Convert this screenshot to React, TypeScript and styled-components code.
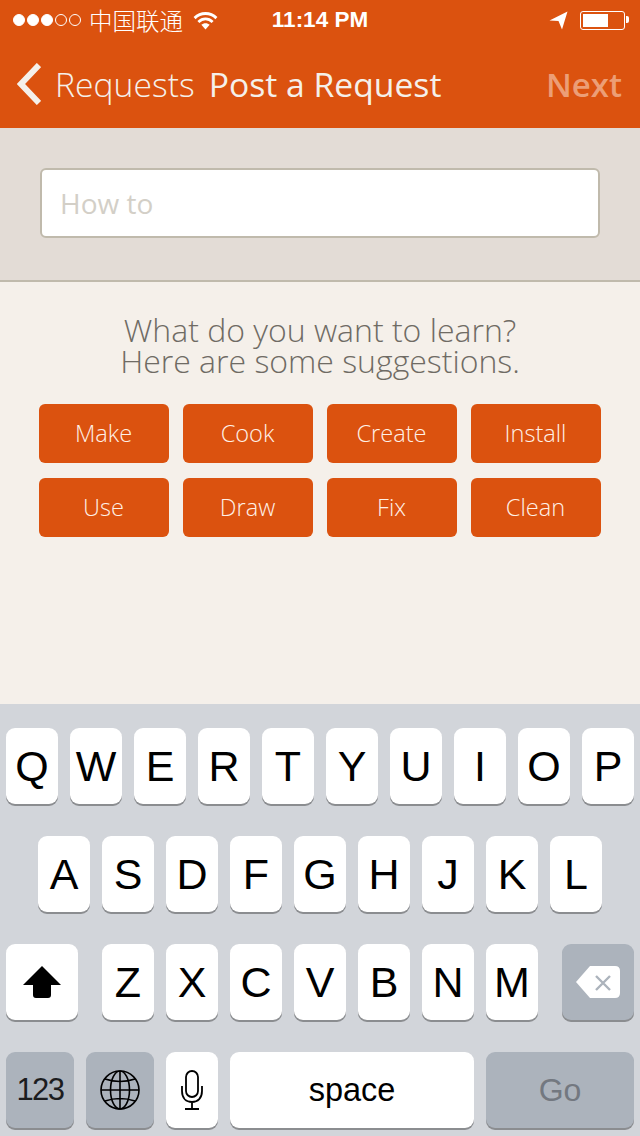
import * as React from 'react';
import styled, { createGlobalStyle } from 'styled-components';

const ORANGE = '#db520f';

const GlobalStyle = createGlobalStyle`
  html, body {
    margin: 0;
    padding: 0;
  }

  body {
    background: #d2d5da;
    font-family: "Open Sans", sans-serif;
  }
`;

const Screen = styled.div`
  width: 640px;
  height: 1136px;
  display: flex;
  flex-direction: column;
  overflow: hidden;
`;

const Header = styled.header`
  height: 128px;
  background: ${ORANGE};
  flex: none;
`;

const StatusBar = styled.div`
  height: 40px;
  display: grid;
  grid-template-columns: 1fr auto 1fr;
  align-items: center;
  padding: 0 15px;
  color: #fff;
  font-family: "Liberation Sans", Arial, sans-serif;
`;

const StatusLeft = styled.div`
  display: flex;
  align-items: center;
`;

const StatusRight = styled.div`
  display: flex;
  align-items: center;
  justify-content: flex-end;
`;

const Signal = styled.div`
  display: flex;
  gap: 2px;
  margin: 0 8px 0 -2px;
`;

const Dot = styled.span<{ $on: boolean }>`
  width: 12px;
  height: 12px;
  box-sizing: border-box;
  border-radius: 50%;
  border: 1px solid #fff;
  background: ${p => (p.$on ? '#fff' : 'transparent')};
`;

const Carrier = styled.span`
  font-family: "Noto Sans CJK SC", sans-serif;
  font-size: 23.5px;
  font-weight: 300;
  line-height: 40px;
  margin-right: 10px;
`;

const Clock = styled.span`
  font-size: 22.5px;
  font-weight: 700;
  line-height: 40px;
`;

const Battery = styled.div`
  width: 45px;
  height: 19px;
  box-sizing: border-box;
  border: 1px solid #fff;
  border-radius: 3px;
  padding: 2px;
  margin-left: 12px;
  position: relative;

  &::before {
    content: '';
    display: block;
    width: 25px;
    height: 13px;
    background: #fff;
  }

  &::after {
    content: '';
    position: absolute;
    top: 4px;
    right: -5px;
    width: 3px;
    height: 7px;
    background: #fff;
    border-radius: 0 2px 2px 0;
  }
`;

const NavBar = styled.nav`
  height: 88px;
  display: flex;
  align-items: center;
  padding: 0 18px 0 17px;
  color: #f5f0ea;
`;

const BackIcon = styled.svg`
  width: 24px;
  height: 42px;
  margin-right: 14px;
`;

const BackLabel = styled.span`
  font-size: 33.7px;
  font-weight: 300;
  margin-right: 14px;
`;

const NavTitle = styled.span`
  font-size: 33.7px;
  font-weight: 400;
  flex: 1;
`;

const NextLabel = styled.span`
  font-size: 33px;
  font-weight: 600;
  color: #ec9e76;
`;

const SearchArea = styled.section`
  height: 154px;
  flex: none;
  box-sizing: border-box;
  background: #e3dcd6;
  border-bottom: 2px solid #c0baac;
  padding: 40px 40px 0;
`;

const HowToInput = styled.input`
  display: block;
  width: 560px;
  height: 70px;
  box-sizing: border-box;
  border: 2px solid #c0baac;
  border-radius: 6px;
  background: #fff;
  padding: 0 18px;
  outline: none;
  font-family: "Open Sans", sans-serif;
  font-size: 28px;
  font-weight: 400;

  &::placeholder {
    color: #d3cfc7;
    opacity: 1;
  }
`;

const Suggestions = styled.section`
  flex: 1;
  background: #f5f0ea;
  padding-top: 32px;
`;

const Prompt = styled.p`
  margin: 0 0 28px;
  text-align: center;
  color: #6f6b64;
  font-size: 32px;
  font-weight: 300;
  line-height: 31px;
`;

const SuggestionGrid = styled.div`
  display: grid;
  grid-template-columns: repeat(4, 130px);
  gap: 15px 14px;
  justify-content: center;
`;

const Suggestion = styled.button`
  height: 59px;
  border: none;
  border-radius: 6px;
  padding: 0 1px 2px 0;
  background: ${ORANGE};
  color: #fff0e6;
  font-family: "Open Sans", sans-serif;
  font-size: 23.6px;
  font-weight: 300;
`;

const Keyboard = styled.section`
  height: 432px;
  flex: none;
  box-sizing: border-box;
  background: #d2d5da;
  padding: 24px 6px 0;
  display: flex;
  flex-direction: column;
  gap: 32px;
`;

const KeyRow = styled.div<{ $inset?: number }>`
  display: flex;
  gap: 12px;
  padding: 0 ${p => p.$inset || 0}px;
`;

const Key = styled.div<{ $width?: number; $dark?: boolean; $before?: number; $after?: number }>`
  width: ${p => p.$width || 52}px;
  height: 76px;
  flex: none;
  display: flex;
  align-items: center;
  justify-content: center;
  border-radius: 9px;
  background: ${p => (p.$dark ? '#acb3bc' : '#fff')};
  box-shadow: 0 2px 0 #8b8d90;
  margin-left: ${p => p.$before || 0}px;
  margin-right: ${p => p.$after || 0}px;
  color: #000;
  font-family: "Liberation Sans", Arial, sans-serif;
  font-size: 43px;
`;

const NumberKeyText = styled.span`
  font-size: 31px;
  letter-spacing: -1.5px;
  color: #1c1d1f;
`;

const SpaceText = styled.span`
  font-size: 32.5px;
`;

const GoText = styled.span`
  font-size: 32px;
  color: #737880;
`;

const ROWS = ['QWERTYUIOP', 'ASDFGHJKL'];
const THIRD_ROW = 'ZXCVBNM';
const SUGGESTIONS = ['Make', 'Cook', 'Create', 'Install', 'Use', 'Draw', 'Fix', 'Clean'];

const WifiIcon = () => (
  <svg width="25" height="19" viewBox="0 0 26 20" fill="none" stroke="#fff" strokeWidth="3">
    <path d="M1.5 7.5C8 1 18 1 24.5 7.5" />
    <path d="M5.5 11.5C10 7.3 16 7.3 20.5 11.5" />
    <path d="M13 19.5L8.6 14.6C11 12.4 15 12.4 17.4 14.6Z" fill="#fff" stroke="none" />
  </svg>
);

const LocationIcon = () => (
  <svg width="19" height="19" viewBox="0 0 19 19" fill="#fff">
    <path d="M18.5 0.5L0.5 9.5L9.5 10L13 18.5Z" />
  </svg>
);

const ShiftIcon = () => (
  <svg width="38" height="32" viewBox="0 0 38 32" fill="#000">
    <path d="M19 0L38 19H28V29Q28 32 25 32H13Q10 32 10 29V19H0Z" />
  </svg>
);

const DeleteIcon = () => (
  <svg width="44" height="32" viewBox="0 0 44 32">
    <path d="M14 0H39Q44 0 44 5V27Q44 32 39 32H14L0 16Z" fill="#fff" />
    <path d="M20 10L34 24M34 10L20 24" stroke="#acb3bc" strokeWidth="2.4" />
  </svg>
);

const GlobeIcon = () => (
  <svg width="40" height="40" viewBox="0 0 40 40" fill="none" stroke="#000" strokeWidth="1.6">
    <circle cx="20" cy="20" r="19" />
    <ellipse cx="20" cy="20" rx="9.5" ry="19" />
    <path d="M20 1V39M1 20H39M5 9Q20 14 35 9M5 31Q20 26 35 31" />
  </svg>
);

const MicIcon = () => (
  <svg width="22" height="40" viewBox="0 0 22 40" fill="none" stroke="#000" strokeWidth="1.8">
    <rect x="5" y="1" width="12" height="26" rx="6" />
    <path d="M1 16V21C1 28 5 32 11 32C17 32 21 28 21 21V16M11 32V39M4 39H18" />
  </svg>
);

export default function App() {
  return (
    <Screen>
      <GlobalStyle />
      <Header>
        <StatusBar>
          <StatusLeft>
            <Signal>
              {[true, true, true, false, false].map((on, i) => <Dot key={i} $on={on} />)}
            </Signal>
            <Carrier>中国联通</Carrier>
            <WifiIcon />
          </StatusLeft>
          <Clock>11:14 PM</Clock>
          <StatusRight>
            <LocationIcon />
            <Battery />
          </StatusRight>
        </StatusBar>
        <NavBar>
          <BackIcon viewBox="0 0 24 42" fill="none" stroke="#f5f0ea" strokeWidth="6">
            <path d="M22 2L4 21L22 40" />
          </BackIcon>
          <BackLabel>Requests</BackLabel>
          <NavTitle>Post a Request</NavTitle>
          <NextLabel>Next</NextLabel>
        </NavBar>
      </Header>

      <SearchArea>
        <HowToInput placeholder="How to" readOnly />
      </SearchArea>

      <Suggestions>
        <Prompt>
          What do you want to learn?
          <br />
          Here are some suggestions.
        </Prompt>
        <SuggestionGrid>
          {SUGGESTIONS.map(label => <Suggestion key={label}>{label}</Suggestion>)}
        </SuggestionGrid>
      </Suggestions>

      <Keyboard>
        <KeyRow>
          {ROWS[0].split('').map(letter => <Key key={letter}>{letter}</Key>)}
        </KeyRow>
        <KeyRow $inset={32}>
          {ROWS[1].split('').map(letter => <Key key={letter}>{letter}</Key>)}
        </KeyRow>
        <KeyRow>
          <Key $width={72} $after={12}><ShiftIcon /></Key>
          {THIRD_ROW.split('').map(letter => <Key key={letter}>{letter}</Key>)}
          <Key $width={72} $dark $before={12}><DeleteIcon /></Key>
        </KeyRow>
        <KeyRow>
          <Key $width={68} $dark><NumberKeyText>123</NumberKeyText></Key>
          <Key $width={68} $dark><GlobeIcon /></Key>
          <Key><MicIcon /></Key>
          <Key $width={244}><SpaceText>space</SpaceText></Key>
          <Key $width={148} $dark><GoText>Go</GoText></Key>
        </KeyRow>
      </Keyboard>
    </Screen>
  );
}
